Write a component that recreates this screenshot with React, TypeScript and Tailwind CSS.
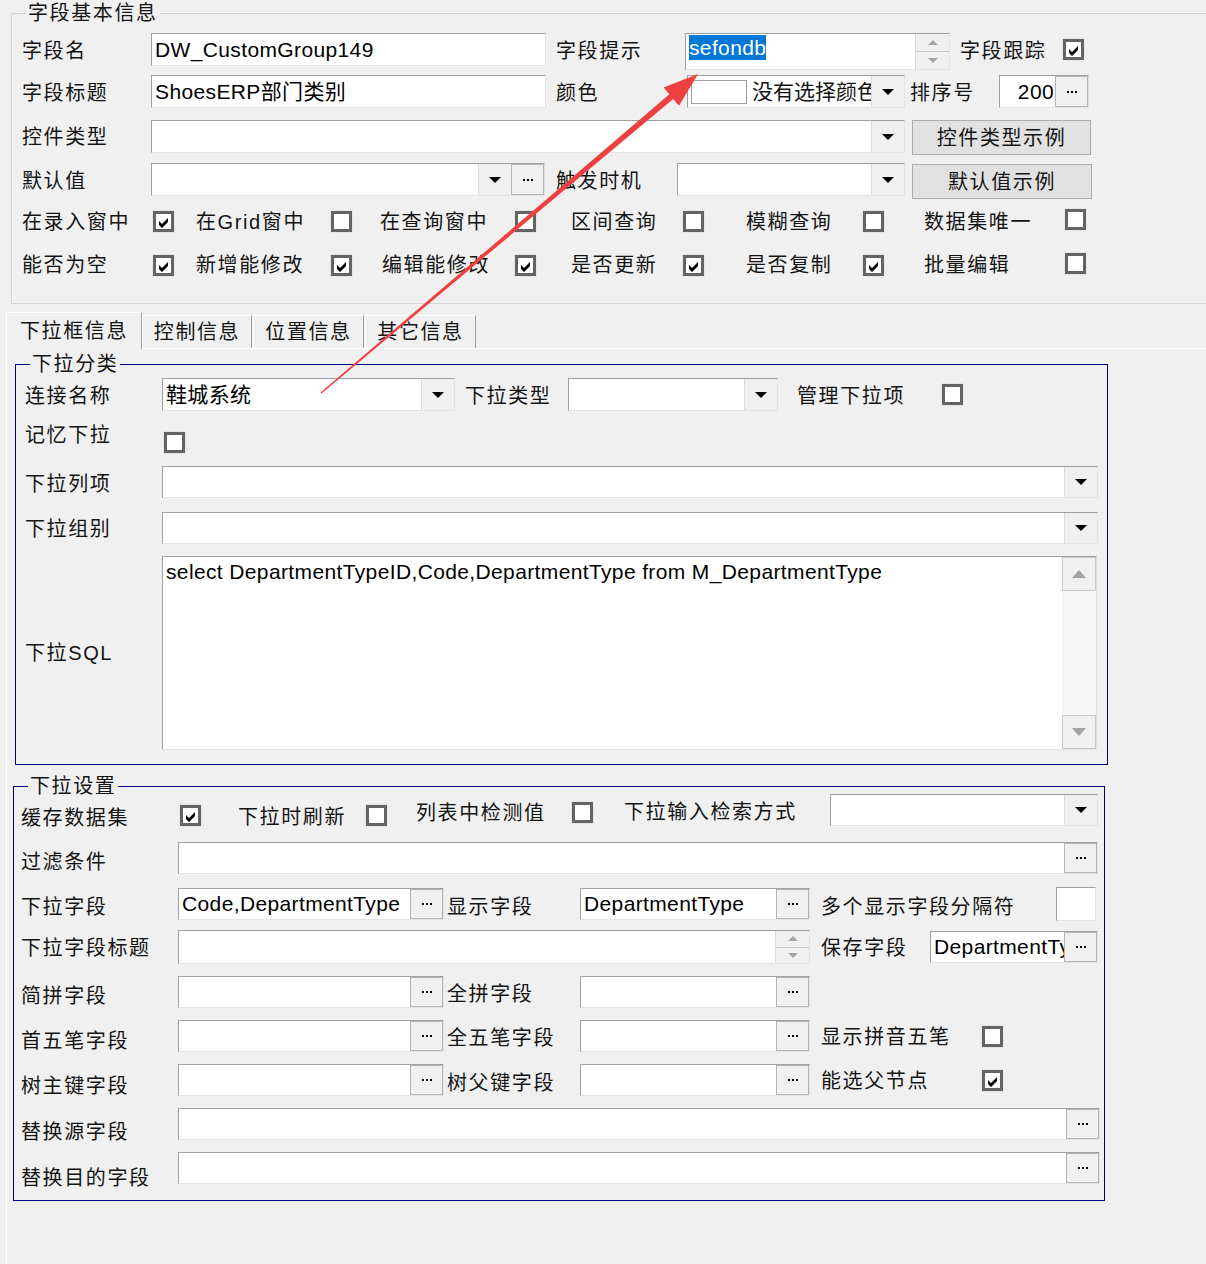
import React from "react";

type P = { c?: string; children?: React.ReactNode };

function Label({ c = "", children }: P) {
  return (
    <div className={`shrink-0 whitespace-nowrap text-[20px] leading-[24px] tracking-[1.6px] text-[#141414] ${c}`}>
      {children}
    </div>
  );
}

function Check({ on, c = "" }: { on?: boolean; c?: string }) {
  return (
    <div className={`flex h-[23px] w-[23px] shrink-0 items-center justify-center border border-[#e6e6e6] ${c}`}>
      <div className="h-[21px] w-[21px] border-[3px] border-[#646464] bg-white">
        {on && (
          <svg width="15" height="15" viewBox="0 0 15 15">
            <polygon points="3,7 6,10 12,4 12,8 6,14 3,11" fill="#000" />
          </svg>
        )}
      </div>
    </div>
  );
}

function Box({ c = "", children }: P) {
  return (
    <div
      className={`flex shrink-0 overflow-hidden border border-b-[#e3e3e3] border-l-[#a0a0a0] border-r-[#e3e3e3] border-t-[#a0a0a0] bg-white ${c}`}
    >
      {children}
    </div>
  );
}

function Txt({ c = "", children }: P) {
  return (
    <div
      className={`flex min-w-0 flex-1 overflow-hidden whitespace-nowrap pl-[3px] text-[21px] leading-[24px] tracking-[0.37px] text-black ${c}`}
    >
      {children}
    </div>
  );
}

function DropBtn() {
  return (
    <div className="flex h-full w-[33px] shrink-0 items-center justify-center border-l border-[#dadada] bg-[#f0f0f0]">
      <svg width="12" height="6" viewBox="0 0 12 6">
        <polygon points="0,0 12,0 6,6" fill="#000" />
      </svg>
    </div>
  );
}

function DotsBtn() {
  return (
    <div className="flex h-full w-[33px] shrink-0 items-center justify-center border border-[#b4b4b4] bg-[#f0f0f0]">
      <svg width="10" height="2" viewBox="0 0 10 2">
        <rect x="0" y="0" width="2" height="2" fill="#000" />
        <rect x="4" y="0" width="2" height="2" fill="#000" />
        <rect x="8" y="0" width="2" height="2" fill="#000" />
      </svg>
    </div>
  );
}

function Spin() {
  return (
    <div className="flex h-full w-[34px] shrink-0 flex-col border-l border-[#d8d8d8] bg-[#f0f0f0]">
      <div className="flex flex-1 items-center justify-center border-b border-[#c8c8c8]">
        <svg width="10" height="5" viewBox="0 0 10 5">
          <polygon points="0,5 10,5 5,0" fill="#a6a6a6" />
        </svg>
      </div>
      <div className="flex flex-1 items-center justify-center">
        <svg width="10" height="5" viewBox="0 0 10 5">
          <polygon points="0,0 10,0 5,5" fill="#a6a6a6" />
        </svg>
      </div>
    </div>
  );
}

function Btn({ c = "", children }: P) {
  return (
    <div
      className={`flex shrink-0 items-center justify-center border border-[#adadad] bg-[#e1e1e1] text-[20px] leading-[24px] tracking-[1.6px] text-[#141414] ${c}`}
    >
      {children}
    </div>
  );
}

function Group({ title, c = "", children }: P & { title: string }) {
  return (
    <div className={`relative flex shrink-0 flex-col border ${c}`}>
      <div className="absolute -top-[13px] left-[14px] bg-[#f0f0f0] px-[2px] text-[20px] leading-[24px] tracking-[1.6px] text-[#141414]">
        {title}
      </div>
      {children}
    </div>
  );
}

function Tab({ active, c = "", children }: P & { active?: boolean }) {
  return (
    <div
      className={`flex shrink-0 items-center justify-center border-l border-r border-t border-l-white border-r-[#a0a0a0] border-t-white bg-[#f0f0f0] text-[20px] leading-[24px] tracking-[1.6px] text-[#141414] ${
        active ? "relative z-10 -mb-px h-[37px]" : "h-[33px]"
      } ${c}`}
    >
      {children}
    </div>
  );
}

function Arrow() {
  return (
    <svg
      className="pointer-events-none absolute left-0 top-0"
      width="1206"
      height="1264"
      viewBox="0 0 1206 1264"
    >
      <polygon
        points="320.5,392.4 669.4,94.3 663.6,87.4 698,74 679,105.8 673.2,98.9 321.5,393.6"
        fill="#ef4040"
      />
    </svg>
  );
}

export default function App() {
  return (
    <div className="relative h-[1264px] w-[1206px] overflow-hidden bg-[#f0f0f0] font-['Liberation_Sans','Noto_Sans_CJK_SC',sans-serif] text-black">
      {/* 字段基本信息 */}
      <Group title="字段基本信息" c="ml-[11px] mt-[13px] h-[291px] w-[1220px] border-[#d5d5d5]">
        <div className="mt-[19px] flex h-[33px] items-center">
          <Label c="ml-[10px] w-[129px] translate-y-[1px]">字段名</Label>
          <Box c="h-[33px] w-[395px]">
            <Txt c="items-center">DW_CustomGroup149</Txt>
          </Box>
          <Label c="ml-[10px] w-[129px] translate-y-[1px]">字段提示</Label>
          <Box c="mt-[4px] h-[37px] w-[265px] border-l-[#8a8a8a] border-t-[#8a8a8a]">
            <Txt c="items-start pt-[1px]">
              <span className="bg-[#0078d7] leading-[25px] text-white">sefondb</span>
            </Txt>
            <Spin />
          </Box>
          <Label c="ml-[10px] w-[102px] translate-y-[1px]">字段跟踪</Label>
          <Check on />
        </div>

        <div className="mt-[9px] flex h-[33px] items-center">
          <Label c="ml-[10px] w-[129px] translate-y-[1px]">字段标题</Label>
          <Box c="h-[33px] w-[395px]">
            <Txt c="items-center">ShoesERP部门类别</Txt>
          </Box>
          <Label c="ml-[10px] w-[131px] translate-y-[1px]">颜色</Label>
          <Box c="h-[33px] w-[218px]">
            <div className="flex min-w-0 flex-1 items-center overflow-hidden">
              <div className="ml-[3px] h-[24px] w-[56px] shrink-0 border border-[#a0a0a0] bg-white" />
              <span className="ml-[5px] whitespace-nowrap text-[21px] leading-[24px] text-[#141414]">没有选择颜色</span>
            </div>
            <DropBtn />
          </Box>
          <Label c="ml-[5px] w-[89px] translate-y-[1px]">排序号</Label>
          <Box c="h-[33px] w-[90px]">
            <Txt c="items-center justify-end pr-[1px]">200</Txt>
            <DotsBtn />
          </Box>
        </div>

        <div className="mt-[12px] flex h-[33px] items-center">
          <Label c="ml-[10px] w-[129px]">控件类型</Label>
          <Box c="h-[33px] w-[754px]">
            <Txt />
            <DropBtn />
          </Box>
          <Btn c="ml-[7px] h-[35px] w-[179px] mt-[2px]">控件类型示例</Btn>
        </div>

        <div className="mt-[10px] flex h-[33px] items-center">
          <Label c="ml-[10px] w-[129px] translate-y-[1px]">默认值</Label>
          <Box c="h-[33px] w-[394px]">
            <Txt />
            <DropBtn />
            <DotsBtn />
          </Box>
          <Label c="ml-[11px] w-[121px] translate-y-[1px]">触发时机</Label>
          <Box c="h-[33px] w-[228px]">
            <Txt />
            <DropBtn />
          </Box>
          <Btn c="ml-[7px] mt-[4px] h-[35px] w-[180px]">默认值示例</Btn>
        </div>

        <div className="mt-[13px] flex h-[24px] items-center">
          <Label c="ml-[10px] w-[130px] translate-y-[1px]">在录入窗中</Label>
          <Check on />
          <Label c="ml-[21px] w-[134px] translate-y-[1px]">在Grid窗中</Label>
          <Check />
          <Label c="ml-[27px] w-[134px] translate-y-[1px]">在查询窗中</Label>
          <Check />
          <Label c="ml-[34px] w-[111px] translate-y-[1px]">区间查询</Label>
          <Check />
          <Label c="ml-[41px] w-[116px] translate-y-[1px]">模糊查询</Label>
          <Check />
          <Label c="ml-[39px] w-[140px] translate-y-[1px]">数据集唯一</Label>
          <Check c="-mt-[4px]" />
        </div>

        <div className="mt-[20px] flex h-[24px] items-center">
          <Label c="ml-[10px] w-[130px]">能否为空</Label>
          <Check on />
          <Label c="ml-[21px] w-[134px]">新增能修改</Label>
          <Check on />
          <Label c="ml-[29px] w-[132px]">编辑能修改</Label>
          <Check on />
          <Label c="ml-[34px] w-[111px]">是否更新</Label>
          <Check on />
          <Label c="ml-[41px] w-[116px]">是否复制</Label>
          <Check on />
          <Label c="ml-[39px] w-[140px]">批量编辑</Label>
          <Check c="-mt-[4px]" />
        </div>
      </Group>

      {/* tabs */}
      <div className="ml-[6px] mt-[8px] flex h-[36px] items-end">
        <Tab active c="w-[136px]">
          下拉框信息
        </Tab>
        <Tab c="w-[110px]">控制信息</Tab>
        <Tab c="ml-[1px] w-[111px]">位置信息</Tab>
        <Tab c="ml-[1px] w-[111px]">其它信息</Tab>
      </div>

      <div className="ml-[6px] flex h-[916px] flex-col border-l border-t border-white">
        {/* 下拉分类 */}
        <Group title="下拉分类" c="ml-[8px] mt-[15px] h-[401px] w-[1093px] border-[#000080]">
          <div className="mt-[13px] flex h-[33px] items-center">
            <Label c="ml-[9px] w-[137px] translate-y-[1px]">连接名称</Label>
            <Box c="h-[33px] w-[293px]">
              <Txt c="items-center">鞋城系统</Txt>
              <DropBtn />
            </Box>
            <Label c="ml-[10px] w-[103px] translate-y-[1px]">下拉类型</Label>
            <Box c="h-[33px] w-[210px]">
              <Txt />
              <DropBtn />
            </Box>
            <Label c="ml-[19px] w-[144px] translate-y-[1px]">管理下拉项</Label>
            <Check />
          </div>

          <div className="mt-[19px] flex h-[24px] items-center">
            <Label c="ml-[9px] w-[138px] -translate-y-[7px]">记忆下拉</Label>
            <Check />
          </div>

          <div className="mt-[12px] flex h-[32px] items-center">
            <Label c="ml-[9px] w-[137px] translate-y-[2px]">下拉列项</Label>
            <Box c="h-[32px] w-[936px]">
              <Txt />
              <DropBtn />
            </Box>
          </div>

          <div className="mt-[14px] flex h-[32px] items-center">
            <Label c="ml-[9px] w-[137px] translate-y-[1px]">下拉组别</Label>
            <Box c="h-[32px] w-[936px]">
              <Txt />
              <DropBtn />
            </Box>
          </div>

          <div className="mt-[12px] flex h-[194px] items-center">
            <Label c="ml-[9px] w-[137px]">下拉SQL</Label>
            <Box c="h-[194px] w-[935px]">
              <Txt c="items-start pt-[3px]">select DepartmentTypeID,Code,DepartmentType from M_DepartmentType</Txt>
              <div className="flex h-full w-[34px] shrink-0 flex-col">
                <div className="flex h-[34px] items-center justify-center border border-[#c8c8c8] bg-[#f0f0f0]">
                  <svg width="14" height="8" viewBox="0 0 14 8">
                    <polygon points="0,8 14,8 7,0" fill="#a3a3a3" />
                  </svg>
                </div>
                <div className="flex-1 bg-[#f6f6f6]" />
                <div className="flex h-[34px] items-center justify-center border border-[#c8c8c8] bg-[#f0f0f0]">
                  <svg width="14" height="8" viewBox="0 0 14 8">
                    <polygon points="0,0 14,0 7,8" fill="#a3a3a3" />
                  </svg>
                </div>
              </div>
            </Box>
          </div>
        </Group>

        {/* 下拉设置 */}
        <Group title="下拉设置" c="ml-[6px] mt-[21px] h-[415px] w-[1092px] border-[#000080]">
          <div className="mt-[7px] flex h-[34px] items-start">
            <Label c="ml-[7px] mt-[12px] w-[158px]">缓存数据集</Label>
            <Check on c="mt-[10px]" />
            <Label c="ml-[36px] mt-[11px] w-[127px]">下拉时刷新</Label>
            <Check c="mt-[10px]" />
            <Label c="ml-[28px] mt-[7px] w-[155px]">列表中检测值</Label>
            <Check c="mt-[7px]" />
            <Label c="ml-[30px] mt-[6px] w-[206px]">下拉输入检索方式</Label>
            <Box c="h-[32px] w-[268px]">
              <Txt />
              <DropBtn />
            </Box>
          </div>

          <div className="mt-[14px] flex h-[32px] items-center">
            <Label c="ml-[7px] w-[157px] translate-y-[4px]">过滤条件</Label>
            <Box c="h-[32px] w-[920px]">
              <Txt />
              <DotsBtn />
            </Box>
          </div>

          <div className="mt-[14px] flex h-[32px] items-center">
            <Label c="ml-[7px] w-[157px] translate-y-[3px]">下拉字段</Label>
            <Box c="h-[32px] w-[266px]">
              <Txt c="items-center">Code,DepartmentType</Txt>
              <DotsBtn />
            </Box>
            <Label c="ml-[3px] w-[133px] translate-y-[3px]">显示字段</Label>
            <Box c="h-[32px] w-[230px]">
              <Txt c="items-center">DepartmentType</Txt>
              <DotsBtn />
            </Box>
            <Label c="ml-[11px] w-[235px] translate-y-[3px]">多个显示字段分隔符</Label>
            <Box c="h-[34px] w-[40px]" />
          </div>

          <div className="mt-[10px] flex h-[34px] items-center">
            <Label c="ml-[7px] w-[157px] translate-y-[1px]">下拉字段标题</Label>
            <Box c="h-[34px] w-[632px]">
              <Txt />
              <Spin />
            </Box>
            <Label c="ml-[11px] w-[109px] translate-y-[1px]">保存字段</Label>
            <Box c="h-[32px] w-[168px]">
              <Txt c="items-center">DepartmentType</Txt>
              <DotsBtn />
            </Box>
          </div>

          <div className="mt-[12px] flex h-[32px] items-center">
            <Label c="ml-[7px] w-[157px] translate-y-[4px]">简拼字段</Label>
            <Box c="h-[32px] w-[266px]">
              <Txt />
              <DotsBtn />
            </Box>
            <Label c="ml-[3px] w-[133px] translate-y-[2px]">全拼字段</Label>
            <Box c="h-[32px] w-[230px]">
              <Txt />
              <DotsBtn />
            </Box>
          </div>

          <div className="mt-[12px] flex h-[32px] items-center">
            <Label c="ml-[7px] w-[157px] translate-y-[5px]">首五笔字段</Label>
            <Box c="h-[32px] w-[266px]">
              <Txt />
              <DotsBtn />
            </Box>
            <Label c="ml-[3px] w-[133px] translate-y-[2px]">全五笔字段</Label>
            <Box c="h-[32px] w-[230px]">
              <Txt />
              <DotsBtn />
            </Box>
            <Label c="ml-[11px] w-[160px] translate-y-[1px]">显示拼音五笔</Label>
            <Check />
          </div>

          <div className="mt-[12px] flex h-[32px] items-center">
            <Label c="ml-[7px] w-[157px] translate-y-[6px]">树主键字段</Label>
            <Box c="h-[32px] w-[266px]">
              <Txt />
              <DotsBtn />
            </Box>
            <Label c="ml-[3px] w-[133px] translate-y-[3px]">树父键字段</Label>
            <Box c="h-[32px] w-[230px]">
              <Txt />
              <DotsBtn />
            </Box>
            <Label c="ml-[11px] w-[160px] translate-y-[1px]">能选父节点</Label>
            <Check on />
          </div>

          <div className="mt-[12px] flex h-[32px] items-center">
            <Label c="ml-[7px] w-[157px] translate-y-[8px]">替换源字段</Label>
            <Box c="h-[32px] w-[922px]">
              <Txt />
              <DotsBtn />
            </Box>
          </div>

          <div className="mt-[12px] flex h-[32px] items-center">
            <Label c="ml-[7px] w-[157px] translate-y-[10px]">替换目的字段</Label>
            <Box c="h-[32px] w-[922px]">
              <Txt />
              <DotsBtn />
            </Box>
          </div>
        </Group>
      </div>

      <Arrow />
    </div>
  );
}
